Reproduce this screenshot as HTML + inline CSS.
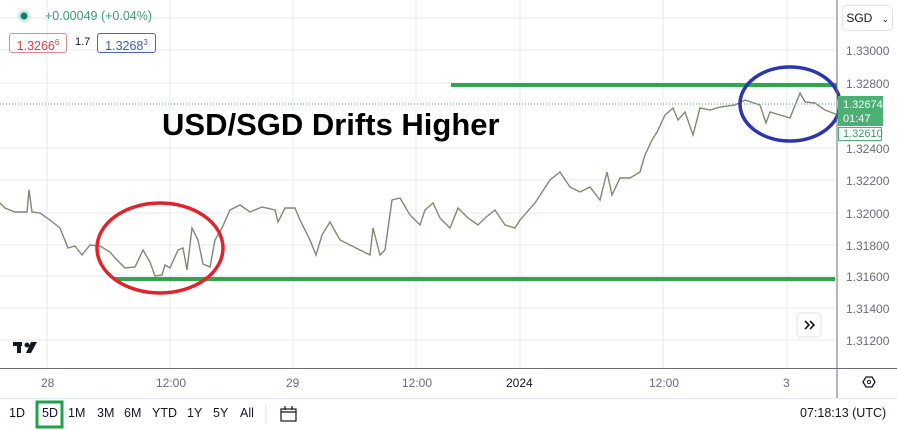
<!DOCTYPE html>
<html><head><style>
body{margin:0;width:897px;height:430px;overflow:hidden;background:#fff;font-family:"Liberation Sans",sans-serif;position:relative}
.a{position:absolute}
.ax{font-size:12px;color:#6a6d78}
.tb{font-size:12.5px;color:#131722;top:406px}
</style></head><body>
<svg class="a" style="left:0;top:0" width="897" height="430">
<g stroke="#e6ebf2" stroke-width="1">
<line x1="47" y1="0" x2="47" y2="368"/><line x1="170" y1="0" x2="170" y2="368"/><line x1="293" y1="0" x2="293" y2="368"/><line x1="416" y1="0" x2="416" y2="368"/><line x1="520" y1="0" x2="520" y2="368"/><line x1="663" y1="0" x2="663" y2="368"/><line x1="787" y1="0" x2="787" y2="368"/>
<line x1="0" y1="18" x2="837" y2="18"/><line x1="0" y1="50" x2="837" y2="50"/><line x1="0" y1="83" x2="837" y2="83"/><line x1="0" y1="148" x2="837" y2="148"/><line x1="0" y1="180" x2="837" y2="180"/><line x1="0" y1="213" x2="837" y2="213"/><line x1="0" y1="245" x2="837" y2="245"/><line x1="0" y1="276" x2="837" y2="276"/><line x1="0" y1="308" x2="837" y2="308"/><line x1="0" y1="340" x2="837" y2="340"/>
</g>
<line x1="0" y1="104" x2="837" y2="104" stroke="#5a9e7a" stroke-width="1" stroke-dasharray="1,2"/>
<polyline fill="none" stroke="#7d8a70" stroke-width="1.4" points="0,203 5,208 15,212 27,212 29,190 32,212 40,213 50,220 60,228 68,248 75,246 82,255 90,245 100,246 110,252 115,258 125,268 135,267 143,250 150,262 155,276 162,275 165,265 170,268 178,250 183,248 187,270 192,228 198,240 203,264 210,267 215,240 222,228 230,210 240,205 250,212 262,207 275,210 278,222 285,208 295,208 300,220 310,240 316,255 322,235 330,222 340,240 360,250 370,255 373,228 380,255 385,250 392,200 400,198 410,215 420,225 425,210 433,203 440,218 450,228 458,208 468,218 478,225 485,218 495,210 505,225 515,228 520,220 535,203 550,180 560,172 570,187 580,192 590,187 600,200 607,172 612,195 620,178 630,178 640,172 645,155 652,140 657,132 665,115 673,108 678,120 685,112 693,135 700,108 710,110 720,107 735,105 745,100 760,105 766,123 770,112 790,118 800,93 805,102 815,103 825,110 838,115"/>
<line x1="451" y1="85" x2="837" y2="85" stroke="#2fa84a" stroke-width="4"/>
<line x1="115" y1="279" x2="835" y2="279" stroke="#2fa84a" stroke-width="4"/>
<ellipse cx="160" cy="248" rx="63" ry="45" fill="none" stroke="#e0242b" stroke-width="3.5"/>
<ellipse cx="790" cy="104" rx="50" ry="37" fill="none" stroke="#2b35b0" stroke-width="3.5"/>
<line x1="837" y1="0" x2="837" y2="398" stroke="#6a6d78"/>
<line x1="0" y1="368.5" x2="897" y2="368.5" stroke="#6a6d78"/>
<line x1="0" y1="398.5" x2="897" y2="398.5" stroke="#e6ebf2"/>
<line x1="266" y1="404" x2="266" y2="424" stroke="#e0e3eb"/>
<circle cx="24" cy="16" r="6" fill="#cfe9e2"/><circle cx="24" cy="16" r="3.5" fill="#13806a"/>
<g fill="#131722"><rect x="13" y="342" width="9" height="4"/><rect x="17" y="342" width="4" height="11"/><circle cx="27" cy="345" r="2.5"/><path d="M31 342h6l-6 11h-5z"/></g>
<rect x="797" y="313" width="24" height="24" rx="4" fill="#fff" stroke="#e0e3eb"/>
<path d="M805 321l4 4-4 4M810 321l4 4-4 4" stroke="#131722" stroke-width="1.6" fill="none"/>
<path d="M863 382l3-5h6l3 5-3 5h-6z" fill="none" stroke="#131722" stroke-width="1.3"/><circle cx="869" cy="382" r="1.6" fill="none" stroke="#131722"/>
<rect x="281" y="409" width="15" height="12" fill="none" stroke="#131722" stroke-width="1.2"/>
<path d="M281 412h15M285 406v4M292 406v4" stroke="#131722" stroke-width="1.2"/>
<rect x="37" y="402" width="25" height="25" fill="none" stroke="#1fa34a" stroke-width="3"/>
</svg>
<div class="a" style="left:45px;top:9px;font-size:12.5px;color:#3f9c72">+0.00049 (+0.04%)</div>
<div class="a" style="left:9px;top:33px;width:56px;height:18px;border:1px solid #e08a8f;border-radius:3px;color:#d8434b;font-size:12.5px;line-height:18px;text-align:center">1.3266<sup style="font-size:8px">6</sup></div>
<div class="a" style="left:75px;top:36px;font-size:11px;color:#131722">1.7</div>
<div class="a" style="left:97px;top:33px;width:57px;height:18px;border:1px solid #4a66b5;border-radius:3px;color:#3a5bc7;font-size:12.5px;line-height:18px;text-align:center">1.3268<sup style="font-size:8px">3</sup></div>
<div class="a" style="left:162px;top:107px;font-size:31px;font-weight:bold;color:#000;letter-spacing:0px">USD/SGD Drifts Higher</div>
<div class="a" style="left:842px;top:5px;width:49px;height:24px;border:1px solid #e0e3eb;border-radius:5px;font-size:12px;line-height:24px;color:#131722">&nbsp;SGD <span style="font-size:9px;margin-left:6px">⌄</span></div>
<div class="a ax" style="left:846px;top:44px">1.33000</div>
<div class="a ax" style="left:846px;top:77px">1.32800</div>
<div class="a ax" style="left:846px;top:142px">1.32400</div>
<div class="a ax" style="left:846px;top:174px">1.32200</div>
<div class="a ax" style="left:846px;top:207px">1.32000</div>
<div class="a ax" style="left:846px;top:239px">1.31800</div>
<div class="a ax" style="left:846px;top:270px">1.31600</div>
<div class="a ax" style="left:846px;top:302px">1.31400</div>
<div class="a ax" style="left:846px;top:334px">1.31200</div>
<div class="a" style="left:838px;top:96px;width:45px;height:30px;background:#4caf73;color:#fff;font-size:11px;line-height:14px;padding:2px 0 0 5px;box-sizing:border-box">1.32674<br>01:47</div>
<div class="a" style="left:838px;top:127px;width:44px;height:14px;border:1px solid #4caf73;background:#fff;color:#3c9a64;font-size:11px;line-height:12px;padding-left:4px;box-sizing:border-box">1.32610</div>
<div class="a ax" style="left:41px;top:376px">28</div>
<div class="a ax" style="left:156px;top:376px">12:00</div>
<div class="a ax" style="left:286px;top:376px">29</div>
<div class="a ax" style="left:402px;top:376px">12:00</div>
<div class="a ax" style="left:506px;top:376px;color:#131722">2024</div>
<div class="a ax" style="left:649px;top:376px">12:00</div>
<div class="a ax" style="left:783px;top:376px">3</div>
<div class="a tb" style="left:9px">1D</div>
<div class="a tb" style="left:42px">5D</div>
<div class="a tb" style="left:68px">1M</div>
<div class="a tb" style="left:97px">3M</div>
<div class="a tb" style="left:124px">6M</div>
<div class="a tb" style="left:152px">YTD</div>
<div class="a tb" style="left:187px">1Y</div>
<div class="a tb" style="left:213px">5Y</div>
<div class="a tb" style="left:240px">All</div>
<div class="a tb" style="left:800px">07:18:13 (UTC)</div>
</body></html>
